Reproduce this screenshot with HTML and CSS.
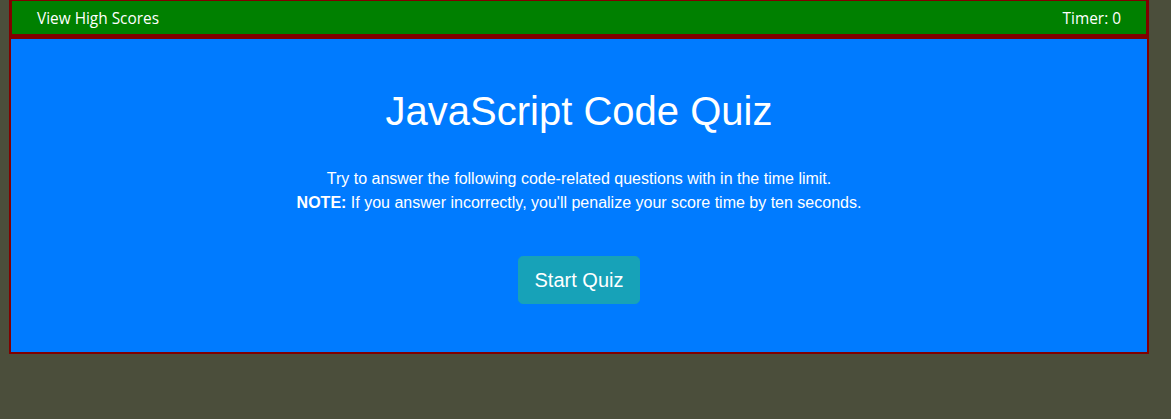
FILE: index.html
```html
<!DOCTYPE html>
<html lang="en">
<head>
<meta charset="utf-8">
<title>JavaScript Code Quiz</title>
<link rel="stylesheet" href="styles.css">
</head>
<body>
<div class="page">
  <header class="topbar">
    <a class="scores-link" href="#">View High Scores</a>
    <span class="timer">Timer: 0</span>
  </header>
  <main class="quiz">
    <h1 class="quiz-title">JavaScript Code Quiz</h1>
    <p class="quiz-intro">Try to answer the following code-related questions with in the time limit.<br><strong>NOTE:</strong> If you answer incorrectly, you'll penalize your score time by ten seconds.</p>
    <button class="start-btn" type="button">Start Quiz</button>
  </main>
</div>
</body>
</html>
```

FILE: styles.css
```css
html, body {
  margin: 0;
  padding: 0;
}
body {
  background: #4b4e3b;
  font-family: "Liberation Sans", Arial, sans-serif;
  color: #fff;
  height: 419px;
  overflow: hidden;
}
.page {
  width: 1140px;
  margin-left: 9px;
  margin-top: -2px;
}
.topbar {
  display: flex;
  justify-content: space-between;
  align-items: center;
  height: 31px;
  padding: 2px 25px 0;
  background: #008000;
  border: 3px solid #800000;
  font-family: "Open Sans", "Noto Sans", sans-serif;
  font-size: 15.4px;
}
.scores-link {
  color: #fff;
  text-decoration: none;
}
.timer {
  color: #fff;
}
.quiz {
  background: #007bff;
  border: 2px solid #800000;
  padding-top: 48px;
  box-sizing: border-box;
  height: 317px;
  display: flex;
  flex-direction: column;
  align-items: center;
  text-align: center;
}
.quiz-title {
  margin: 0;
  font-size: 40px;
  font-weight: 400;
  line-height: 48px;
}
.quiz-intro {
  margin: 32px 0 0;
  font-size: 16px;
  line-height: 24px;
}
.quiz-intro strong {
  font-weight: 700;
}
.start-btn {
  margin-top: 41px;
  background: #17a2b8;
  color: #fff;
  border: 1px solid #17a2b8;
  border-radius: 4.8px;
  padding: 8px 16px;
  font-family: "Liberation Sans", Arial, sans-serif;
  font-size: 20px;
  line-height: 30px;
  cursor: pointer;
}
```
